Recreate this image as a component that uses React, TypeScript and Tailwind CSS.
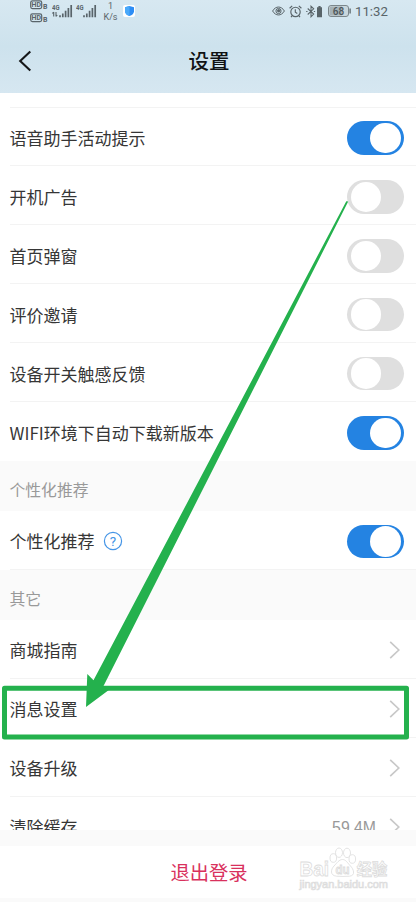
import type { ReactNode } from "react";

function HdIcon({ sim }: { sim: string }) {
  return (
    <svg width="18" height="10" viewBox="0 0 18 10" className="block">
      <rect x="0.7" y="0.8" width="11" height="7.8" rx="1.8" fill="none" stroke="#59646a" strokeWidth="1.2" />
      <text x="6.2" y="7.3" fontSize="7" fontWeight="700" textAnchor="middle" fill="#59646a">HD</text>
      <text x="15.3" y="8.7" fontSize="7" fontWeight="700" textAnchor="middle" fill="#59646a">{sim}</text>
    </svg>
  );
}

function SignalIcon({ traffic = false }: { traffic?: boolean }) {
  return (
    <svg width="21" height="14" viewBox="0 0 21 14" className="block">
      <text x="0" y="5.8" fontSize="7" fontWeight="700" fill="#59646a" textLength="7.5" lengthAdjust="spacingAndGlyphs">4G</text>
      {traffic && <path d="M1.7 8v4.5M0.4 9.5 1.7 8M4 8v4.5M5.3 11 4 12.5" stroke="#59646a" strokeWidth="1.1" fill="none" />}
      <path d="M8 11.2V13.2M10.8 9.4V13.2M13.6 6.8V13.2M16.4 4V13.2M19.2 1V13.2" stroke="#59646a" strokeWidth="1.7" />
    </svg>
  );
}

function StatusBar() {
  return (
    <div className="flex h-7 items-start pl-[30px] font-['Roboto','Liberation_Sans',sans-serif] text-[#596469]">
      <div className="flex flex-col gap-[3px]">
        <HdIcon sim="B" />
        <HdIcon sim="B" />
      </div>
      <div className="ml-[4px] mt-[4px] flex gap-[3px]">
        <SignalIcon traffic />
        <SignalIcon />
      </div>
      <div className="ml-[6px] mt-px w-[15px] text-center text-[9px] leading-[11px]">
        <div>1</div>
        <div>K/s</div>
      </div>
      <div className="ml-[5px] mt-[5px] flex size-3 items-center justify-center rounded-[2px] bg-white">
        <svg width="9" height="10" viewBox="0 0 9 10">
          <path d="M4.5 0 9 1.3v3.9C9 7.5 7.2 9.2 4.5 10 1.8 9.2 0 7.5 0 5.2V1.3Z" fill="#2d8df5" />
          <path d="M4.5 0v10C1.8 9.2 0 7.5 0 5.2V1.3Z" fill="#49a9fa" />
        </svg>
      </div>
      <div className="ml-auto mr-[28px] flex h-[22px] items-center">
        <svg width="13" height="10" viewBox="0 0 13 10" fill="none" stroke="#596469" strokeWidth="1">
          <path d="M.6 5C3.7-.3 9.3-.3 12.4 5 9.3 10.3 3.7 10.3.6 5Z" />
          <circle cx="6.5" cy="5" r="2.6" />
          <circle cx="6.7" cy="4.8" r="1.2" fill="#596469" />
        </svg>
        <svg width="13" height="13" viewBox="0 0 13 13" className="ml-[4px]" fill="none" stroke="#596469" strokeWidth="1.15">
          <circle cx="6.5" cy="6.9" r="4.7" />
          <path d="M6.3 4.2v3.1l2 1.3M.6 3.2 3.2.9M9.8.9l2.6 2.3M3.2 10.7 2 12.2M9.8 10.7l1.2 1.5" />
        </svg>
        <svg width="17" height="13" viewBox="0 0 17 13" className="ml-[4px]" fill="none" stroke="#596469" strokeWidth="1.05">
          <path d="M1.7 3.5 7.7 9 5 11.8V1.2l2.7 2.6-6 5.7M.2 6.5h1.3M7.8 6.5h1.3" />
          <path d="M11 2.2h1.4V1h2.2v1.2H16v10h-5z" fill="#596469" stroke="none" />
        </svg>
        <svg width="23" height="12" viewBox="0 0 23 12" className="ml-[5px]">
          <rect x="0.5" y="0.5" width="20" height="11" rx="2.5" fill="#c9d7dd" stroke="#7b868b" />
          <path d="M3 1.5h11v9H3A1.5 1.5 0 0 1 1.500 9V3A1.5 1.5 0 0 1 3 1.5Z" fill="#a5b1b6" />
          <path d="M22.1 3.5v5" stroke="#596469" strokeWidth="1.3" />
          <text x="10.5" y="9.5" fontSize="10" fontWeight="500" textAnchor="middle" fill="#4b5559">68</text>
        </svg>
        <span className="ml-[4px] w-[33px] whitespace-nowrap pt-px text-[13.2px] leading-[22px]">11:32</span>
      </div>
    </div>
  );
}

function Header() {
  return (
    <header className="h-[93px] shrink-0 bg-linear-to-b from-[#d7e8f1] via-[#cde2ed] to-[#d6e7f1]">
      <StatusBar />
      <div className="grid h-[65px] grid-cols-[60px_1fr_60px] items-center">
        <svg width="14" height="22" viewBox="0 0 14 22" className="ml-[18px]" fill="none" stroke="#151719" strokeWidth="2.1">
          <path d="M12.3 1.4 2.2 11l10.1 9.500" />
        </svg>
        <h1 className="pl-[2px] text-center text-[20.5px] font-medium leading-none text-[#101214]">设置</h1>
      </div>
    </header>
  );
}

function Toggle({ on }: { on: boolean }) {
  return (
    <span className={on ? "flex h-[33.5px] w-[57px] items-center justify-end rounded-full bg-[#2483e2] px-[3.5px]" : "flex h-[33.5px] w-[57px] items-center rounded-full bg-[#dfdfdf] px-[3.5px]"}>
      <span className="size-[30.5px] rounded-full bg-white" />
    </span>
  );
}

function Chevron() {
  return (
    <svg width="11" height="18" viewBox="0 0 11 18" className="mr-[4.500px]" fill="none" stroke="#c8c8c8" strokeWidth="1.7">
      <path d="M1.200 .8 9.800 9 1.200 17.200" />
    </svg>
  );
}

function Row({ label, children, divider = true }: { label: ReactNode; children: ReactNode; divider?: boolean }) {
  return (
    <div className="h-[58.9px] shrink-0 pl-[9.5px]">
      <div className={divider ? "flex h-full items-center justify-between border-b border-[#f3f3f3] pr-3 pt-[3px]" : "flex h-full items-center justify-between pr-3 pt-[3px]"}>
        <span className="flex items-center text-[17px] leading-6 text-[#363636]">{label}</span>
        {children}
      </div>
    </div>
  );
}

function SectionTitle({ children }: { children: ReactNode }) {
  return <div className="flex h-[50px] shrink-0 items-center bg-[#fafafa] pl-[9.5px] pt-[9px] text-[15.8px] leading-6 text-[#999]">{children}</div>;
}

const switches = [
  { label: "语音助手活动提示", on: true },
  { label: "开机广告", on: false },
  { label: "首页弹窗", on: false },
  { label: "评价邀请", on: false },
  { label: "设备开关触感反馈", on: false },
  { label: "WIFI环境下自动下载新版本", on: true },
];

function Watermark() {
  return (
    <svg width="96" height="46" viewBox="0 0 96 46" className="absolute right-[22px] top-0" fill="#fff" stroke="#dcdcdc" strokeWidth="0.8">
      <text x="1.5" y="30" fontSize="21" fontWeight="700" textLength="29.5" lengthAdjust="spacingAndGlyphs" className="font-['Liberation_Sans',sans-serif]">Bai</text>
      <ellipse cx="35.3" cy="12" rx="3.3" ry="4.3" />
      <ellipse cx="41" cy="6.700" rx="3.500" ry="4.700" />
      <ellipse cx="49" cy="6.900" rx="3.500" ry="4.700" />
      <ellipse cx="54.300" cy="13" rx="3.300" ry="4.300" />
      <path d="M44.500 13.500c3.500 0 5 3.500 8 6.500s5.500 9.500-1 10.200c-4 .3-9 .3-13 0-7-.7-5.500-7.200-2.500-10.200s5-6.500 8.500-6.500Z" />
      <text x="37.500" y="27.500" fontSize="12.500" fontWeight="700" fill="#f2f2f2" textLength="14" lengthAdjust="spacingAndGlyphs" className="font-['Liberation_Sans',sans-serif]">du</text>
      <text x="58.700" y="28.800" fontSize="15.500" fontWeight="700" textLength="30.500" lengthAdjust="spacingAndGlyphs">经验</text>
      <text x="1.500" y="41.500" fontSize="10" strokeWidth="0.600" fill="#f0f0f0" textLength="88.500" lengthAdjust="spacingAndGlyphs" className="font-['Liberation_Sans',sans-serif]">jingyan.baidu.com</text>
    </svg>
  );
}

// Highlight frame and arrow lying over the list
function Annotation() {
  return (
    <svg width="416" height="902" viewBox="0 0 416 902" className="pointer-events-none absolute inset-0">
      <rect x="4.5" y="688.3" width="402" height="48.8" fill="none" stroke="#24b14d" strokeWidth="5" strokeLinejoin="round" />
      <path d="M346.3 201.3 93.5 680.3 87.3 674 86 707 108.5 690.3 103.5 686 348.2 201.5Z" fill="#24b14d" />
    </svg>
  );
}

export default function App() {
  return (
    <div className="relative flex h-[902px] w-[416px] flex-col overflow-hidden bg-white font-['Noto_Sans_CJK_SC',sans-serif]">
      <Header />
      <main className="flex h-[737px] shrink-0 flex-col overflow-hidden">
        <div className="ml-[9.5px] h-[14.6px] shrink-0 border-b border-[#f3f3f3]" />
        {switches.map((s, i) => (
          <Row key={s.label} label={s.label} divider={i < switches.length - 1}>
            <Toggle on={s.on} />
          </Row>
        ))}
        <SectionTitle>个性化推荐</SectionTitle>
        <Row
          label={
            <>
              个性化推荐
              <svg width="20" height="20" viewBox="0 0 20 20" className="ml-[8px]">
                <circle cx="10" cy="10" r="8.6" fill="none" stroke="#4595e6" strokeWidth="1.2" />
                <text x="10" y="14.7" fontSize="13.5" textAnchor="middle" fill="#4595e6" className="font-['Roboto',sans-serif]">?</text>
              </svg>
            </>
          }
        >
          <Toggle on />
        </Row>
        <SectionTitle>其它</SectionTitle>
        <Row label="商城指南"><Chevron /></Row>
        <Row label="消息设置"><Chevron /></Row>
        <Row label="设备升级"><Chevron /></Row>
        <Row label="清除缓存">
          <div className="flex items-center">
            <span className="mr-[12.5px] pt-[3px] font-['Liberation_Sans',sans-serif] text-[15.8px] leading-6 text-[#999]">59.4M</span>
            <Chevron />
          </div>
        </Row>
      </main>
      <footer className="h-[72px] shrink-0 bg-[#fafafa] pb-1 pt-4">
        <div className="relative flex h-[52px] items-center justify-center bg-white">
          <button className="pl-[2px] pt-[2px] text-[19.3px] leading-none text-[#d9315d]">退出登录</button>
          <Watermark />
        </div>
      </footer>
      <Annotation />
    </div>
  );
}
